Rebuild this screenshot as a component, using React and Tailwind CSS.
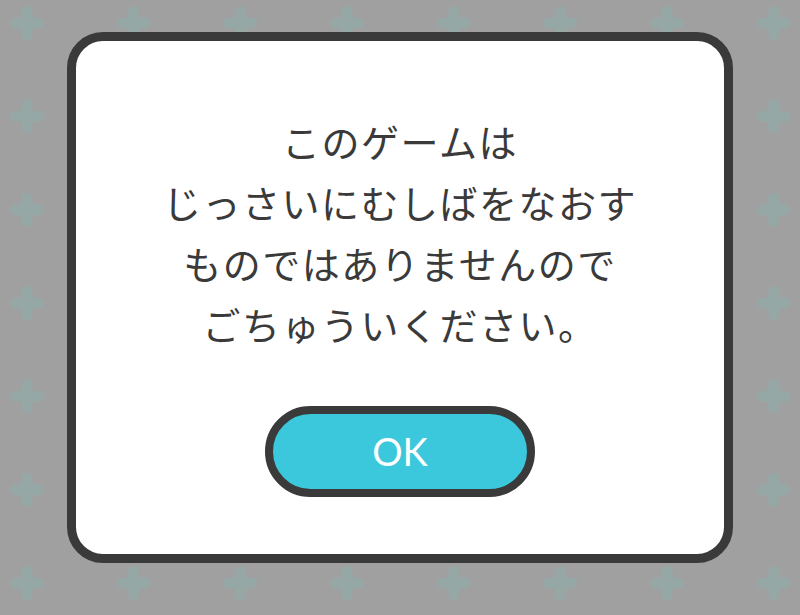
import React from "react";

// light teal crosses tiled over the grey backdrop
const CrossPattern = () => (
  <svg className="absolute inset-0 w-full h-full" aria-hidden="true">
    <defs>
      <pattern
        id="cross"
        x="-26.33"
        y="-23.67"
        width="106.67"
        height="93.33"
        patternUnits="userSpaceOnUse"
      >
        <g transform="translate(53.33 46.67)" fill="#95a8a6">
          <rect x="-17" y="-5.5" width="34" height="11" rx="5.5" />
          <rect x="-5.5" y="-17" width="11" height="34" rx="5.5" />
        </g>
      </pattern>
    </defs>
    <rect width="100%" height="100%" fill="url(#cross)" />
  </svg>
);

const lines = [
  "このゲームは",
  "じっさいにむしばをなおす",
  "ものではありませんので",
  "ごちゅういください。",
];

export default function App() {
  return (
    <div className="relative w-full h-[615px] overflow-hidden bg-[#a0a0a0]">
      <CrossPattern />
      <div className="relative flex justify-center pt-[32px]">
        <div className="w-[666px] h-[531px] bg-white border-[9px] border-[#3a3a3a] rounded-[36px] flex flex-col items-center pt-[69px]">
          <div
            className="text-center text-[#3a3a3a] text-[38px] leading-[61px] tracking-[1.5px]"
            style={{ fontFamily: '"Noto Sans CJK JP", "Noto Sans", sans-serif' }}
          >
            {lines.map((line, i) => (
              <p key={i}>{line}</p>
            ))}
          </div>
          <button
            className="mt-[52px] w-[270px] h-[91px] rounded-full border-[8px] border-[#3a3a3a] bg-[#3cc8dc] text-white text-[38px] flex items-center justify-center"
            style={{ fontFamily: "Lato, sans-serif" }}
          >
            OK
          </button>
        </div>
      </div>
    </div>
  );
}
